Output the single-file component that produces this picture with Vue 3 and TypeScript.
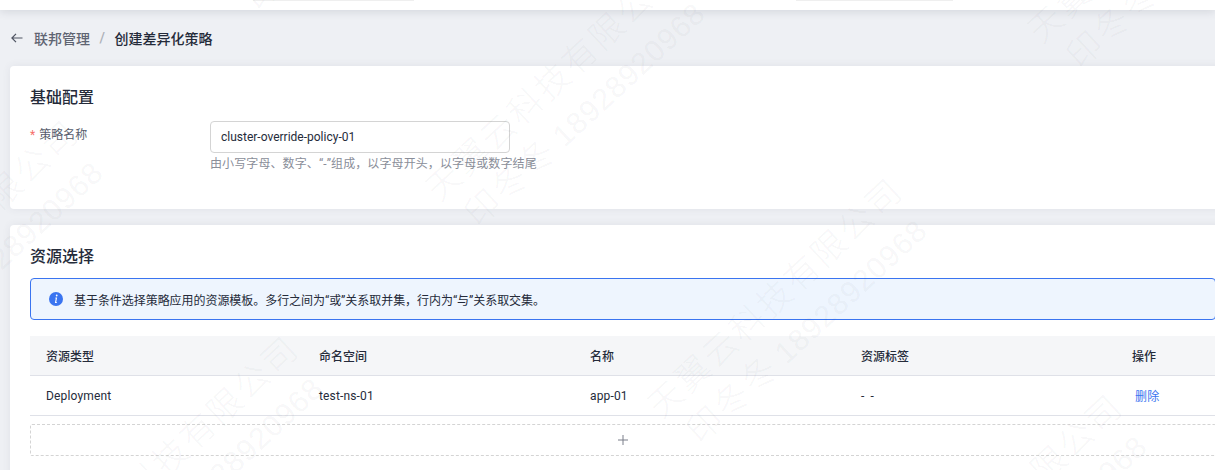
<script setup lang="ts">
interface Tile { x: number; y: number }
const tiles: Tile[] = [
  { x: 467.5, y: 216.5 },
  { x: 689.5, y: 433.5 },
  { x: 1069.5, y: 58.5 },
  { x: 85.5, y: 591.5 },
  { x: -134.5, y: 375.5 },
  { x: 909.5, y: 649.5 },
  { x: 247.5, y: 0.5 },
  { x: 1289.5, y: 274.5 },
]
const columns = ['资源类型', '命名空间', '名称', '资源标签', '操作']
</script>

<template>
  <div class="page">
    <div class="topbar">
      <span class="stub stub-a"></span>
      <span class="stub stub-b"></span>
    </div>
    <div class="crumbs">
      <svg class="back" width="12" height="10" viewBox="0 0 12 10" fill="none" stroke="#4f5462" stroke-width="1.2">
        <path d="M11.5 5H1M5 .8 .9 5 5 9.2" />
      </svg>
      <span class="crumb-parent">联邦管理</span>
      <span class="crumb-sep">/</span>
      <span class="crumb-current">创建差异化策略</span>
    </div>

    <section class="card card-basic">
      <h2 class="title">基础配置</h2>
      <div class="field">
        <label class="label"><i class="star">*</i>策略名称</label>
        <div class="control">
          <div class="input">cluster-override-policy-01</div>
          <p class="hint">由小写字母、数字、“-”组成，以字母开头，以字母或数字结尾</p>
        </div>
      </div>
    </section>

    <section class="card card-source">
      <h2 class="title">资源选择</h2>
      <div class="alert">
        <svg class="info" width="14" height="14" viewBox="0 0 14 14">
          <circle cx="7" cy="7" r="7" fill="#3a74f0" />
          <path d="M7.7 2.6a.9.9 0 1 1 0 1.8.9.9 0 0 1 0-1.8ZM6.5 5.6h1.6L7.2 10.2h.9l-.2.9H5.9l.9-4.6h-.5z" fill="#fff" />
        </svg>
        <span>基于条件选择策略应用的资源模板。多行之间为“或”关系取并集，行内为“与”关系取交集。</span>
      </div>
      <div class="table">
        <div class="row head">
          <div v-for="c in columns" :key="c" class="cell">{{ c }}</div>
        </div>
        <div class="row body">
          <div class="cell">Deployment</div>
          <div class="cell">test-ns-01</div>
          <div class="cell">app-01</div>
          <div class="cell dashes">- -</div>
          <div class="cell"><a class="link">删除</a></div>
        </div>
      </div>
      <div class="add">
        <svg width="10" height="10" viewBox="0 0 10 10" stroke="#7b7f8a" stroke-width="1">
          <path d="M5 0v10M0 5h10" />
        </svg>
      </div>
    </section>

    <div class="watermarks">
      <div v-for="(t, i) in tiles" :key="i" class="tile" :style="{ left: t.x + 'px', top: t.y + 'px' }">
        <div class="wm-line wm-company">天翼云科技有限公司</div>
        <div class="wm-line"><span class="wm-name">印冬冬</span> <span class="wm-phone">18928920968</span></div>
      </div>
    </div>
  </div>
</template>

<style>
html, body { margin: 0; overflow: hidden; }
</style>

<style scoped>
.page {
  position: relative;
  width: 1215px;
  height: 470px;
  overflow: hidden;
  background: #eef0f4;
  font-family: Roboto, "Noto Sans CJK SC", sans-serif;
  font-size: 12px;
  color: #252b3a;
}
.topbar {
  display: flex;
  height: 10px;
  background: #fff;
  box-shadow: 0 2px 8px rgba(60, 65, 85, 0.14);
}
.stub { display: block; height: 1px; background: #efefef; }
.stub-a { width: 161px; margin-left: 253px; }
.stub-b { width: 157px; margin-left: 382px; }
.crumbs {
  display: flex;
  align-items: center;
  height: 56px;
  padding-left: 11px;
  font-size: 14px;
  font-weight: 500;
  box-sizing: border-box;
}
.back { margin-right: 11px; }
.crumb-parent { color: #5f6472; }
.crumb-sep { margin: 0 10px 0 9.5px; color: #adb0b8; }
.crumb-current { color: #252b3a; margin-left: -0.5px; }
.card {
  width: 1226px;
  margin-left: 10px;
  box-sizing: border-box;
  padding: 0 20px;
  background: #fff;
  border-radius: 4px;
  box-shadow: 0 0 8px rgba(60, 65, 85, 0.08);
}
.card-basic { height: 143px; padding-top: 21px; }
.card-source { margin-top: 16px; height: 300px; padding-top: 21px; }
.title {
  margin: 0;
  font-size: 16px;
  font-weight: 500;
  line-height: 22px;
  color: #252b3a;
}
.field { display: flex; margin-top: 12px; }
.label { width: 180px; padding-top: 2px; line-height: 24px; color: #575d6c; }
.star { font-style: normal; color: #f66f6a; margin-right: 4px; }
.input {
  box-sizing: border-box;
  width: 300px;
  height: 32px;
  padding: 0 10px;
  line-height: 30px;
  border: 1px solid #d4d4d4;
  border-radius: 4px;
  background: #fff;
}
.hint { margin: 2px 0 0; padding-top: 1px; line-height: 16px; color: #8a8e99; letter-spacing: 0.1px; }
.alert {
  display: flex;
  align-items: center;
  gap: 11px;
  box-sizing: border-box;
  height: 42px;
  margin-top: 10px;
  padding-left: 18px;
  background: #eef5fe;
  border: 1px solid #3a74f0;
  border-radius: 4px;
  letter-spacing: -0.05px;
}
.table { margin-top: 16px; }
.row {
  display: grid;
  grid-template-columns: 273px repeat(3, 271px) 1fr;
  align-items: center;
  box-sizing: border-box;
  height: 40px;
  border-bottom: 1px solid #dfe1e8;
}
.head { background: #f5f6f8; font-weight: 500; }
.body { letter-spacing: 0.15px; }
.dashes { word-spacing: 3px; }
.cell { padding-left: 16px; }
.link { display: inline-block; margin-left: 3px; color: #3a74f0; }
.add {
  display: flex;
  align-items: center;
  justify-content: center;
  box-sizing: border-box;
  height: 32px;
  margin-top: 8px;
  border: 1px dashed #d4d4d4;
  border-radius: 2px;
}
.watermarks { position: absolute; inset: 0; pointer-events: none; overflow: hidden; }
.tile {
  position: absolute;
  margin-top: -67px;
  transform-origin: 0 67px;
  transform: rotate(-42.8deg);
  white-space: nowrap;
  color: rgba(50, 55, 75, 0.055);
  font-weight: 300;
}
.wm-line { height: 45px; line-height: 45px; font-size: 30px; font-family: "Noto Sans CJK SC", sans-serif; }
.wm-company { font-size: 34px; letter-spacing: 3px; margin-left: -11px; }
.wm-name { font-size: 34px; letter-spacing: 3px; }
.wm-phone { font-family: "Liberation Sans", sans-serif; letter-spacing: 1px; }
</style>
